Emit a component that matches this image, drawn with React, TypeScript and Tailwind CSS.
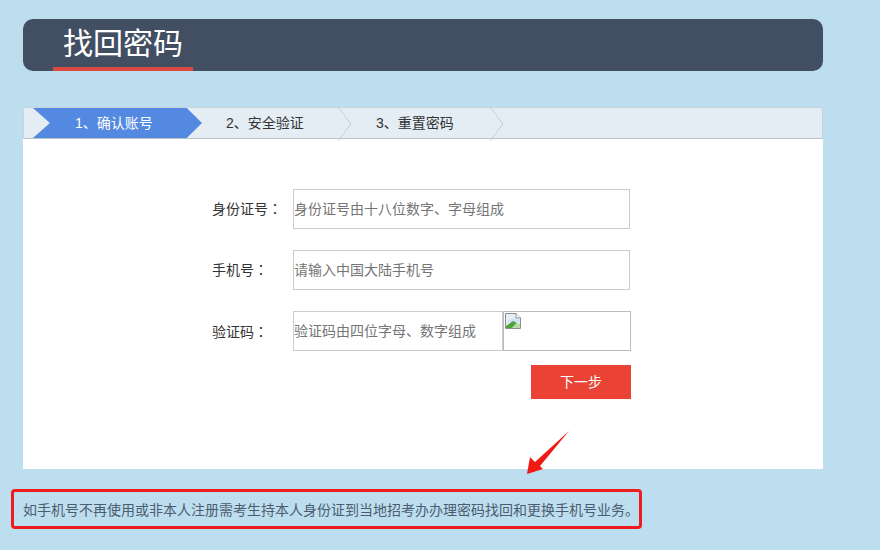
const font = '[font-family:"Liberation_Sans","Noto_Sans_CJK_SC",sans-serif]';
const colon = <span className='[font-family:"Noto_Sans_CJK_TC",sans-serif]'>：</span>;

function Chevron() {
  return (
    <svg width="16" height="34" viewBox="0 0 16 34" className="absolute right-[-1px] top-[-1px]" fill="none">
      <path d="M1 0 L14 17 L1 34" stroke="#c3ced6" strokeWidth="1" />
    </svg>
  );
}

function Field({ label, placeholder, className }: { label: string; placeholder: string; className?: string }) {
  return (
    <div className={"flex items-center " + (className ?? "")}>
      <label className="w-[81px] text-[14px] text-[#333] whitespace-nowrap">{label}{colon}</label>
      <div className="w-[337px] h-[40px] border border-[#ccc] flex items-center text-[14px] text-[#757575] whitespace-nowrap">
        {placeholder}
      </div>
    </div>
  );
}

function BrokenImage() {
  return (
    <svg width="16" height="16" viewBox="0 0 16 16" className="ml-[1px] mt-[1px]">
      <path d="M0.5 0.5 H11 L15.5 5 V15.5 H0.5 Z" fill="#e8eef8" stroke="#8e8e8e" />
      <path d="M11 0.5 V5 H15.5" fill="#fff" stroke="#8e8e8e" />
      <path d="M1 9 L8 5 L15 8 V9 H1 Z" fill="#cfe0f5" />
      <path d="M1 15 V13 L8 8 L12 10 L7 15 Z" fill="#4ea23c" />
      <path d="M7 15 L12 10 L15 11 V15 Z" fill="#b8d9a8" />
    </svg>
  );
}

export default function App() {
  return (
    <div className={"relative w-[880px] h-[550px] overflow-hidden bg-[#bddeef] pt-[19px] pl-[23px] " + font}>
      <header className="w-[800px] h-[52px] rounded-[10px] bg-[#424f63] pl-[30px]">
        <h1 className="w-[140px] h-[52px] border-b-[4px] border-[#dc4a42] text-[30px] leading-[50px] text-white pl-[10px] font-normal whitespace-nowrap">
          找回密码
        </h1>
      </header>

      <main className="mt-[36px] w-[800px]">
        <nav className="flex h-[32px] bg-[#e4edf4] border border-[#c9d3da] border-b-[#b6c2cb] rounded-t-[3px] pl-[9px] text-[14px]">
          <div className="w-[169px] h-[30px] bg-[#5389e0] [clip-path:polygon(0_0,91%_0,100%_50%,91%_100%,0_100%,10%_50%)] text-white flex items-center pl-[42px] whitespace-nowrap">
            1、确认账号
          </div>
          <div className="relative w-[150px] h-[30px] flex items-center pl-[24px] text-[#333] whitespace-nowrap">
            2、安全验证
            <Chevron />
          </div>
          <div className="relative w-[152px] h-[30px] flex items-center pl-[24px] text-[#333] whitespace-nowrap">
            3、重置密码
            <Chevron />
          </div>
        </nav>

        <section className="h-[330px] bg-white pt-[50px] pl-[189px]">
          <Field label="身份证号" placeholder="身份证号由十八位数字、字母组成" />
          <Field className="mt-[21px]" label="手机号" placeholder="请输入中国大陆手机号" />
          <div className="flex mt-[21px]">
            <label className="w-[81px] h-[40px] leading-[40px] text-[14px] text-[#333] whitespace-nowrap">验证码{colon}</label>
            <div className="w-[210px] h-[40px] border border-[#ccc] flex items-center text-[14px] text-[#757575] whitespace-nowrap">
              验证码由四位字母、数字组成
            </div>
            <div className="w-[128px] h-[40px] border border-[#bbb]">
              <BrokenImage />
            </div>
          </div>
          <div className="w-[419px] flex justify-end mt-[14px]">
            <button className="w-[100px] h-[34px] bg-[#ea4335] text-white text-[14px]">下一步</button>
          </div>
        </section>
      </main>

      <p className="mt-[31px] text-[14px] leading-[20px] text-[#4b5c6e] whitespace-nowrap">
        如手机号不再使用或非本人注册需考生持本人身份证到当地招考办办理密码找回和更换手机号业务。
      </p>

      <div className="absolute left-[11px] top-[489px] w-[631px] h-[40px] border-[3px] border-[#ee1c1c] rounded-[4px]" />
      <svg className="absolute left-[525px] top-[428px]" width="46" height="50" viewBox="0 0 46 50">
        <path d="M44 3 L10 34 L5 29 L2 46 L18 41 L15 38 Z" fill="#f01a14" />
      </svg>
    </div>
  );
}
